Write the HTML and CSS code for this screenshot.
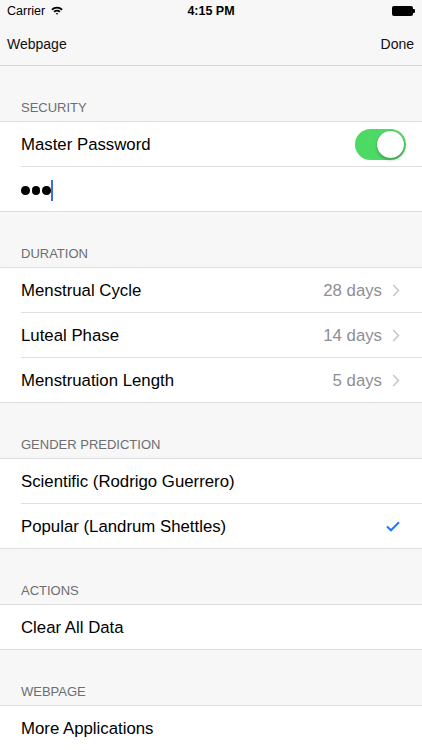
FILE: index.html
```html
<!DOCTYPE html>
<html>
<head>
<meta charset="utf-8">
<link rel="stylesheet" href="styles.css">
</head>
<body>
<div class="top">
  <div class="status">
    <div class="status-left">
      <span class="carrier">Carrier</span>
      <svg class="wifi" width="12" height="9" viewBox="0 0 12 9">
        <path d="M0.3 3.1 A8 8 0 0 1 11.7 3.1 L10.4 4.4 A6.2 6.2 0 0 0 1.6 4.4 Z" fill="#000"/>
        <path d="M2.5 5.3 A5 5 0 0 1 9.5 5.3 L8.2 6.6 A3.2 3.2 0 0 0 3.8 6.6 Z" fill="#000"/>
        <path d="M4.7 7.5 A2 2 0 0 1 7.3 7.5 L6 8.8 Z" fill="#000"/>
      </svg>
    </div>
    <span class="time">4:15 PM</span>
    <div class="status-right">
      <span class="battery"></span><span class="nub"></span>
    </div>
  </div>
  <div class="nav">
    <span>Webpage</span>
    <span>Done</span>
  </div>
</div>

<div class="header">SECURITY</div>
<div class="group">
  <div class="row">
    <span class="label">Master Password</span>
    <span class="switch"><span class="knob"></span></span>
  </div>
  <div class="row">
    <span class="dots" aria-label="●●●"><span class="dot"></span><span class="dot"></span><span class="dot"></span></span><span class="caret"></span>
  </div>
</div>

<div class="header">DURATION</div>
<div class="group">
  <div class="row">
    <span class="label">Menstrual Cycle</span>
    <span class="value">28 days</span>
    <svg class="chev" width="8" height="13" viewBox="0 0 8 13"><path d="M1.2 1 L6.5 6.5 L1.2 12" fill="none" stroke="#c7c7cc" stroke-width="1.6"/></svg>
  </div>
  <div class="row">
    <span class="label">Luteal Phase</span>
    <span class="value">14 days</span>
    <svg class="chev" width="8" height="13" viewBox="0 0 8 13"><path d="M1.2 1 L6.5 6.5 L1.2 12" fill="none" stroke="#c7c7cc" stroke-width="1.6"/></svg>
  </div>
  <div class="row">
    <span class="label">Menstruation Length</span>
    <span class="value">5 days</span>
    <svg class="chev" width="8" height="13" viewBox="0 0 8 13"><path d="M1.2 1 L6.5 6.5 L1.2 12" fill="none" stroke="#c7c7cc" stroke-width="1.6"/></svg>
  </div>
</div>

<div class="header">GENDER PREDICTION</div>
<div class="group">
  <div class="row">
    <span class="label">Scientific (Rodrigo Guerrero)</span>
  </div>
  <div class="row">
    <span class="label">Popular (Landrum Shettles)</span>
    <svg class="check" width="14" height="11" viewBox="0 0 14 11"><path d="M1 5.5 L5 9.3 L13 1.2" fill="none" stroke="#147efb" stroke-width="2"/></svg>
  </div>
</div>

<div class="header">ACTIONS</div>
<div class="group">
  <div class="row">
    <span class="label">Clear All Data</span>
  </div>
</div>

<div class="header">WEBPAGE</div>
<div class="group">
  <div class="row">
    <span class="label">More Applications</span>
  </div>
</div>
</body>
</html>
```
FILE: styles.css
```css
html, body {
  margin: 0;
  padding: 0;
  background: #f7f7f7;
  font-family: "Liberation Sans", Arial, sans-serif;
  color: #000;
}
body {
  width: 422px;
  height: 750px;
  overflow: hidden;
}
.top {
  background: #f7f7f7;
  border-bottom: 1px solid #d6d6d6;
}
.status {
  height: 22px;
  display: flex;
  align-items: center;
  justify-content: space-between;
  padding: 0 7px;
  position: relative;
  font-size: 12.5px;
}
.status-left {
  display: flex;
  align-items: center;
  gap: 6px;
}
.wifi {
  margin-top: -1px;
}
.time {
  position: absolute;
  left: 0;
  right: 0;
  text-align: center;
  font-weight: bold;
  font-size: 12.5px;
}
.status-right {
  display: flex;
  align-items: center;
}
.battery {
  width: 21px;
  height: 10px;
  background: #000;
  border-radius: 2px;
  margin-top: -1px;
}
.nub {
  width: 2px;
  height: 4px;
  background: #000;
  margin-top: -1px;
  border-radius: 0 1px 1px 0;
}
.nav {
  height: 43px;
  display: flex;
  align-items: center;
  justify-content: space-between;
  padding: 0 8px 0 7px;
  font-size: 14px;
  color: #111;
}
.header {
  height: 55px;
  box-sizing: border-box;
  display: flex;
  align-items: flex-end;
  padding: 0 21px 5px;
  font-size: 13px;
  line-height: 16px;
  color: #6d6d72;
}
.group {
  background: #fff;
  border-top: 1px solid #dfdfe2;
  border-bottom: 1px solid #dfdfe2;
}
.row {
  height: 44px;
  box-sizing: border-box;
  padding-top: 1px;
  display: flex;
  align-items: center;
  margin-left: 21px;
  padding-right: 16px;
  font-size: 16.8px;
}
.row + .row {
  border-top: 1px solid #dfdfe2;
  height: 45px;
}
.label {
  flex: 1;
}
.value {
  color: #8e8e93;
  margin-right: 10px;
}
.chev {
  margin-right: 6px;
}
.check {
  margin-right: 6px;
}
.switch {
  width: 51px;
  height: 31px;
  border-radius: 16px;
  background: #4cd964;
  position: relative;
}
.knob {
  position: absolute;
  right: 2px;
  top: 2px;
  width: 27px;
  height: 27px;
  border-radius: 50%;
  background: #fff;
  box-shadow: 0 2px 3px rgba(0,0,0,0.25), 0 0 1px rgba(0,0,0,0.2);
}
.dots {
  display: flex;
  gap: 2px;
  margin-top: 2px;
}
.dot {
  width: 8.5px;
  height: 8.5px;
  border-radius: 50%;
  background: #000;
}
.caret {
  width: 2px;
  height: 21px;
  background: #3f6cdf;
  margin-left: 0;
  margin-top: 1px;
}
```
